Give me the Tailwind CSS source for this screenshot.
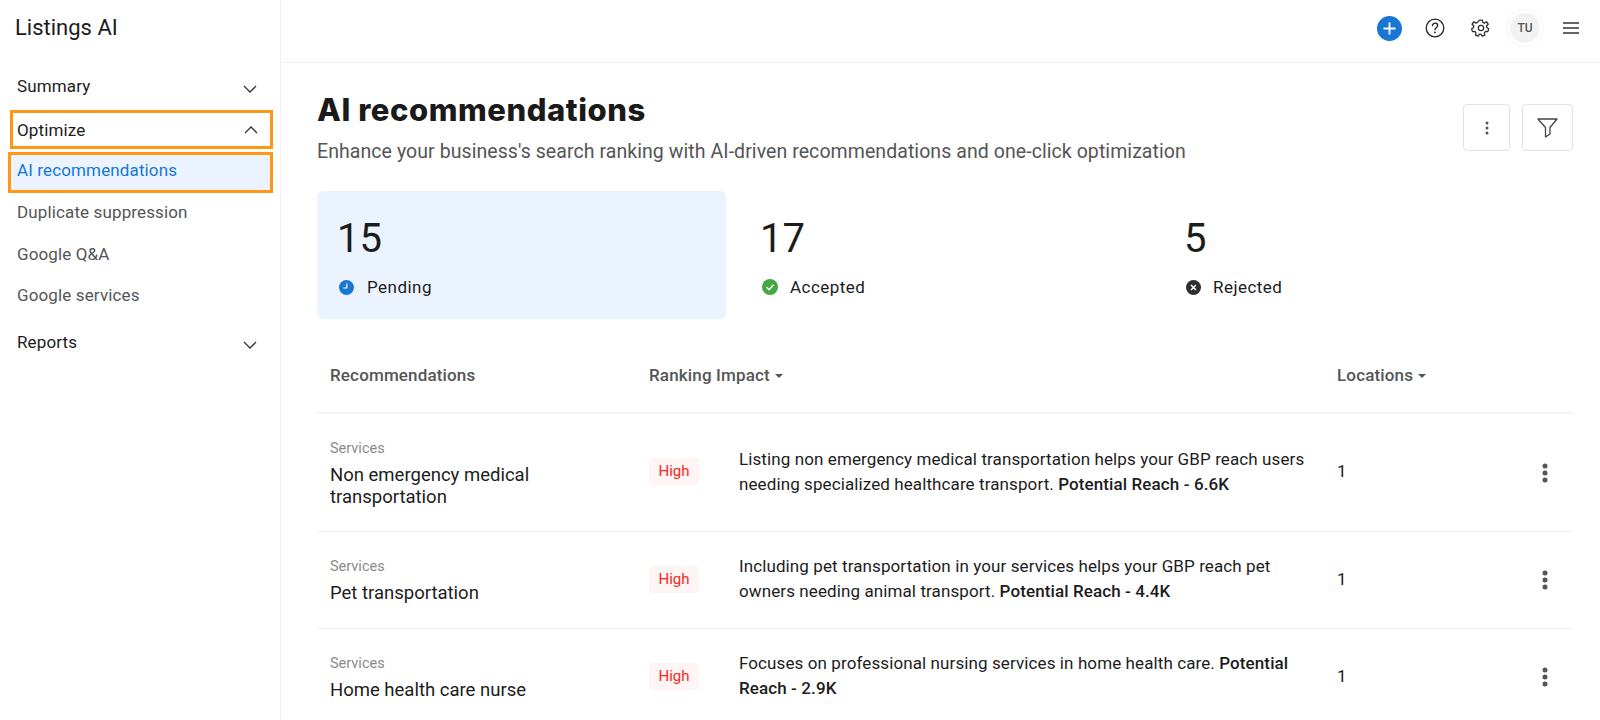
<!DOCTYPE html>
<html lang="en">
<head>
  <meta charset="UTF-8" />
  <title>AI recommendations - Listings AI</title>
  <meta name="viewport" content="width=device-width, initial-scale=1.0" />
  <script src="https://cdn.jsdelivr.net/npm/@tailwindcss/browser@4"></script>
</head>
<body class="bg-white font-['Roboto',sans-serif] text-[#1c1c1c]">
  <div class="flex h-[720px] overflow-hidden">
    <!-- sidebar -->
    <aside class="w-[281px] shrink-0 border-r border-[#f1f1f1]">
      <div class="pl-[15px] pt-[14px] h-[62px] text-[22px] leading-[28px]">Listings AI</div>
      <div class="mt-[8px] h-[34px] pl-[17px] pr-[22px] flex items-center justify-between text-[17px] tracking-[0.13px]">
        <span>Summary</span>
        <svg class="w-[16px] h-[16px] mt-[4px]" viewBox="0 0 16 16" fill="none" stroke="#333" stroke-width="1.3"><path d="M2 5l6 6 6-6" /></svg>
      </div>
      <div class="mt-[6px] ml-[10px] w-[263px] h-[39px] border-[3px] border-[#ff9614] pl-[4px] pr-[11px] flex items-center justify-between text-[17px] tracking-[0.13px]">
        <span class="pt-[2px]">Optimize</span>
        <svg class="w-[16px] h-[16px]" viewBox="0 0 16 16" fill="none" stroke="#333" stroke-width="1.3"><path d="M2 11l6-6 6 6" /></svg>
      </div>
      <div class="mt-[3px] ml-[8px] w-[265px] h-[41px] border-[3px] border-[#ff9614] bg-[#ebf4fe] pl-[6px] pb-[4px] flex items-center text-[17px] tracking-[0.13px] text-[#1976d2]">AI recommendations</div>
      <div class="-mt-[1px] h-[42px] pl-[17px] flex items-center text-[17px] tracking-[0.13px] text-[#555]">Duplicate suppression</div>
      <div class="h-[42px] pl-[17px] flex items-center text-[17px] tracking-[0.13px] text-[#555]">Google Q&amp;A</div>
      <div class="h-[40px] pl-[17px] flex items-center text-[17px] tracking-[0.13px] text-[#555]">Google services</div>
      <div class="mt-[10px] h-[34px] pl-[17px] pr-[22px] flex items-center justify-between text-[17px] tracking-[0.13px]">
        <span>Reports</span>
        <svg class="w-[16px] h-[16px] mt-[4px]" viewBox="0 0 16 16" fill="none" stroke="#333" stroke-width="1.3"><path d="M2 5l6 6 6-6" /></svg>
      </div>
    </aside>

    <div class="flex-1 min-w-0">
      <!-- top bar -->
      <header class="h-[63px] pb-[6px] border-b border-[#f1f1f1] flex items-center justify-end pr-[20px]">
        <div class="w-[25px] h-[25px] rounded-full bg-[#1976d2] flex items-center justify-center">
          <svg class="w-[15px] h-[15px]" viewBox="0 0 15 15" fill="none" stroke="#fff" stroke-width="1.8"><path d="M7.5 1.5v12M1.5 7.5h12" /></svg>
        </div>
        <svg class="ml-[23px] -mt-[1px] w-[20px] h-[20px]" viewBox="0 0 20 20" fill="none" stroke="#222" stroke-width="1.3">
          <circle cx="10" cy="10" r="8.8" />
          <path d="M7.4 7.8c0-1.6 1.2-2.6 2.7-2.6s2.6 1 2.6 2.3c0 2-2.7 2-2.7 4.2" stroke-linecap="round" />
          <circle cx="10" cy="14.4" r="0.9" fill="#222" stroke="none" />
        </svg>
        <svg class="ml-[26px] -mt-[1px] w-[20px] h-[20px]" viewBox="0 0 24 24" fill="none" stroke="#333" stroke-width="1.6" stroke-linejoin="round">
          <path d="M10.3 2.5h3.4l.5 2.8 1.9.8 2.4-1.6 2.2 3-2 1.9.3 2.2 2.3 1.3-1.1 3.4-2.8-.2-1.4 1.7.6 2.7-3.2 1.2-1.5-2.3h-1.8l-1.5 2.3-3.2-1.2.6-2.7-1.4-1.7-2.8.2-1.1-3.4 2.3-1.3.3-2.2-2-1.9 2.2-3 2.4 1.6 1.9-.8z" />
          <circle cx="12" cy="12" r="3.2" />
        </svg>
        <div class="ml-[15px] w-[38px] h-[38px] rounded-full border border-[#f5f5f5] flex items-center justify-center">
          <div class="w-[30px] h-[30px] rounded-full bg-[#f2f2f2] flex items-center justify-center text-[12px] font-medium text-[#555]">TU</div>
        </div>
        <svg class="ml-[18px] w-[18px] h-[14px]" viewBox="0 0 18 14" fill="none" stroke="#333" stroke-width="1.6"><path d="M1 2h16M1 7h16M1 12h16" /></svg>
      </header>

      <main class="pl-[36px] pr-[27px]">
        <!-- heading -->
        <div class="flex justify-between items-start">
          <div>
            <h1 class="pt-[29px] text-[31px] leading-[36px] font-extrabold font-['Inter',sans-serif] tracking-[0.55px] text-[#1a1a1a]">AI recommendations</h1>
            <p class="mt-[11px] text-[19.5px] leading-[26px] tracking-[0.07px] text-[#555]">Enhance your business's search ranking with AI-driven recommendations and one-click optimization</p>
          </div>
          <div class="flex gap-[12px] mt-[41px]">
            <button class="w-[47px] h-[47px] rounded border border-[#e3e3e3] flex items-center justify-center">
              <svg class="w-[4px] h-[14px]" viewBox="0 0 4 14" fill="#555"><circle cx="2" cy="2" r="1.5" /><circle cx="2" cy="7" r="1.5" /><circle cx="2" cy="12" r="1.5" /></svg>
            </button>
            <button class="w-[51px] h-[47px] rounded border border-[#e3e3e3] flex items-center justify-center">
              <svg class="w-[21px] h-[21px]" viewBox="0 0 21 21" fill="none" stroke="#444" stroke-width="1.3" stroke-linejoin="round"><path d="M1 2h19l-7 8.5v6.5l-4.5 3v-9.500z" /></svg>
            </button>
          </div>
        </div>

        <!-- status cards -->
        <div class="mt-[26px] grid grid-cols-[409px_424px_1fr] h-[128px]">
          <div class="bg-[#ebf4fe] rounded-md pl-[21px] pt-[24px]">
            <div class="-ml-[1px] text-[40px] leading-[48px]">15</div>
            <div class="mt-[12px] flex items-center text-[17px] leading-[24px] tracking-[0.47px]">
              <svg class="ml-[1px] w-[15px] h-[15px] mr-[13px]" viewBox="0 0 15 15"><circle cx="7.500" cy="7.500" r="7.500" fill="#1976d2" /><path d="M7.800 3.500v4.500h-3.500" fill="none" stroke="#fff" stroke-width="1.200" /></svg>
              Pending
            </div>
          </div>
          <div class="pl-[35px] pt-[24px]">
            <div class="-ml-[1px] text-[40px] leading-[48px]">17</div>
            <div class="mt-[12px] flex items-center text-[17px] leading-[24px] tracking-[0.47px]">
              <svg class="ml-[1px] w-[16px] h-[16px] mr-[12px]" viewBox="0 0 16 16"><circle cx="8" cy="8" r="8" fill="#43a83f" /><path d="M4.500 8.200l2.500 2.500 4.500-5" fill="none" stroke="#fff" stroke-width="1.500" /></svg>
              Accepted
            </div>
          </div>
          <div class="pl-[35px] pt-[24px]">
            <div class="-ml-[1px] text-[40px] leading-[48px]">5</div>
            <div class="mt-[12px] flex items-center text-[17px] leading-[24px] tracking-[0.47px]">
              <svg class="ml-[1px] w-[15px] h-[15px] mr-[12px]" viewBox="0 0 15 15"><circle cx="7.500" cy="7.500" r="7.500" fill="#2e2e2e" /><path d="M5 5l5 5M10 5l-5 5" fill="none" stroke="#fff" stroke-width="1.500" /></svg>
              Rejected
            </div>
          </div>
        </div>

        <!-- table head -->
        <div class="mt-[35px] h-[60px] pb-[15px] border-b-2 border-[#f5f5f5] grid grid-cols-[13px_319px_688px_1fr] items-center text-[17px] tracking-[0.15px] font-medium text-[#555]">
          <span></span>
          <span>Recommendations</span>
          <span class="flex items-center">Ranking Impact<i class="ml-[5px] mt-[1px] border-x-[4px] border-t-[4px] border-x-transparent border-t-[#555]"></i></span>
          <span class="flex items-center">Locations<i class="ml-[5px] mt-[1px] border-x-[4px] border-t-[4px] border-x-transparent border-t-[#555]"></i></span>
        </div>

        <!-- rows -->
        <div class="h-[118px] border-b border-[#f1f1f1] grid grid-cols-[13px_319px_90px_598px_1fr_24px_16px] items-center">
          <span></span>
          <div class="mt-[1px]">
            <div class="text-[14.5px] leading-[20px] text-[#8a8a8a]">Services</div>
            <div class="mt-[5px] text-[18.5px] leading-[22px] w-[260px]">Non emergency medical transportation</div>
          </div>
          <span class="-mt-[2px] w-[50px] h-[27px] rounded bg-[#fff5f4] flex items-center justify-center text-[15px] text-[#f8281e]">High</span>
          <p class="-mt-[2px] text-[17px] leading-[25px] tracking-[0.1px] w-[570px]">Listing non emergency medical transportation helps your GBP reach users needing specialized healthcare transport. <b class="font-medium">Potential Reach - 6.6K</b></p>
          <span class="-mt-[1px] text-[17px]">1</span>
          <svg class="w-[6px] h-[20px] justify-self-center" viewBox="0 0 6 20" fill="#555"><circle cx="3" cy="3" r="2.500" /><circle cx="3" cy="10" r="2.500" /><circle cx="3" cy="17" r="2.500" /></svg>
          <span></span>
        </div>
        <div class="h-[97px] border-b border-[#f1f1f1] grid grid-cols-[13px_319px_90px_598px_1fr_24px_16px] items-center">
          <span></span>
          <div class="mt-[1px]">
            <div class="text-[14.5px] leading-[20px] text-[#8a8a8a]">Services</div>
            <div class="mt-[5px] text-[18.5px] leading-[22px]">Pet transportation</div>
          </div>
          <span class="-mt-[2px] w-[50px] h-[27px] rounded bg-[#fff5f4] flex items-center justify-center text-[15px] text-[#f8281e]">High</span>
          <p class="-mt-[2px] text-[17px] leading-[25px] tracking-[0.1px] w-[570px]">Including pet transportation in your services helps your GBP reach pet owners needing animal transport. <b class="font-medium">Potential Reach - 4.4K</b></p>
          <span class="-mt-[1px] text-[17px]">1</span>
          <svg class="w-[6px] h-[20px] justify-self-center" viewBox="0 0 6 20" fill="#555"><circle cx="3" cy="3" r="2.500" /><circle cx="3" cy="10" r="2.500" /><circle cx="3" cy="17" r="2.500" /></svg>
          <span></span>
        </div>
        <div class="h-[96px] grid grid-cols-[13px_319px_90px_598px_1fr_24px_16px] items-center">
          <span></span>
          <div class="mt-[1px]">
            <div class="text-[14.5px] leading-[20px] text-[#8a8a8a]">Services</div>
            <div class="mt-[5px] text-[18.5px] leading-[22px]">Home health care nurse</div>
          </div>
          <span class="-mt-[2px] w-[50px] h-[27px] rounded bg-[#fff5f4] flex items-center justify-center text-[15px] text-[#f8281e]">High</span>
          <p class="-mt-[2px] text-[17px] leading-[25px] tracking-[0.1px] w-[570px]">Focuses on professional nursing services in home health care. <b class="font-medium">Potential Reach - 2.9K</b></p>
          <span class="-mt-[1px] text-[17px]">1</span>
          <svg class="w-[6px] h-[20px] justify-self-center" viewBox="0 0 6 20" fill="#555"><circle cx="3" cy="3" r="2.500" /><circle cx="3" cy="10" r="2.500" /><circle cx="3" cy="17" r="2.500" /></svg>
          <span></span>
        </div>
      </main>
    </div>
  </div>
</body>
</html>
